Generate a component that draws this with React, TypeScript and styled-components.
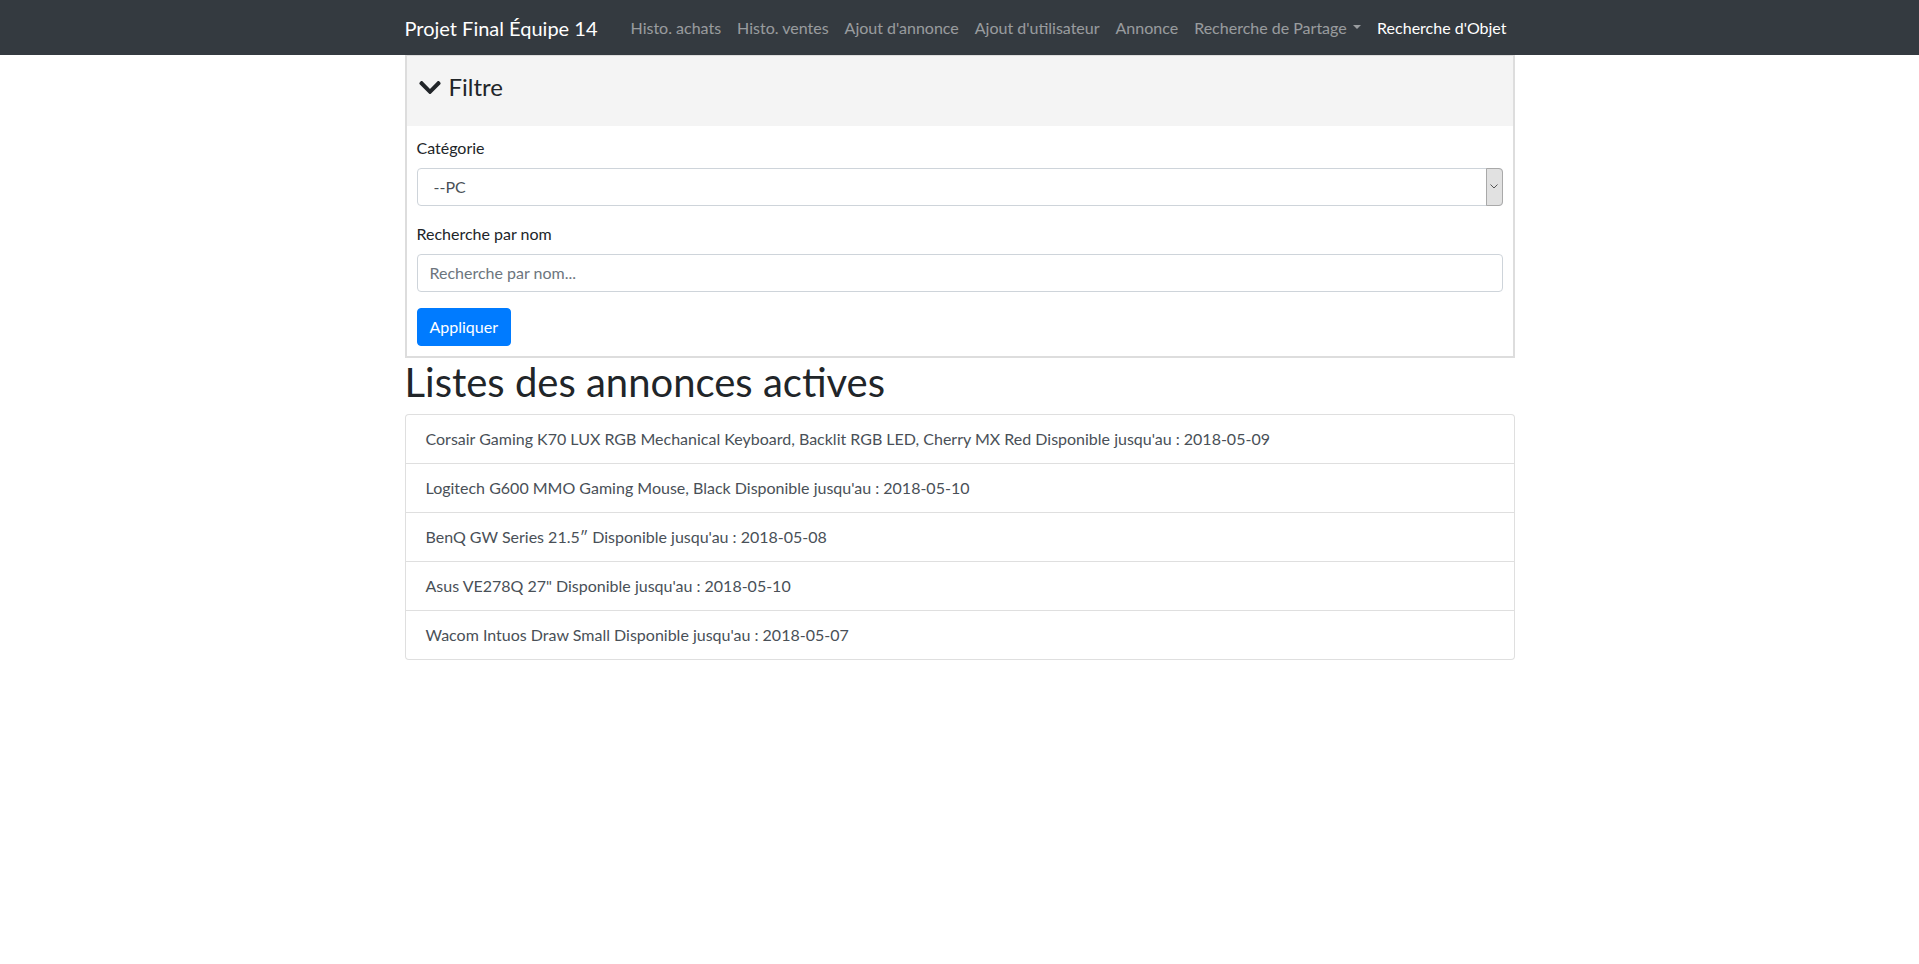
import React from "react";
import styled, { createGlobalStyle } from "styled-components";

const Global = createGlobalStyle`
  *, *::before, *::after { box-sizing: border-box; }
  body {
    margin: 0;
    font-family: "Lato", "Roboto", sans-serif;
    font-size: 16px;
    line-height: 1.5;
    color: #212529;
    background: #fff;
  }
`;

const Navbar = styled.nav`
  height: 55px;
  background: #343a40;
  padding: 0 16px;
  display: flex;
  align-items: center;
`;

const Container = styled.div`
  width: 100%;
  max-width: 1140px;
  margin: 0 auto;
  padding: 0 15px;
`;

const NavContainer = styled(Container)`
  display: flex;
  align-items: center;
`;

const Brand = styled.a`
  font-size: 20px;
  line-height: 30px;
  color: #fff;
  margin-right: 16px;
  text-decoration: none;
  white-space: nowrap;
`;

const NavList = styled.ul`
  list-style: none;
  display: flex;
  margin: 0 0 0 auto;
  padding: 0;
`;

const NavLink = styled.a<{ $active?: boolean }>`
  display: block;
  padding: 8px;
  font-size: 16px;
  line-height: 24px;
  color: ${(p) => (p.$active ? "#fff" : "rgba(255,255,255,0.5)")};
  text-decoration: none;
  white-space: nowrap;
`;

const Caret = styled.span`
  display: inline-block;
  margin-left: 0.4em;
  vertical-align: 0.255em;
  border-top: 0.3em solid;
  border-right: 0.3em solid transparent;
  border-left: 0.3em solid transparent;
`;

const FilterCard = styled.section`
  border: 2px solid #dddddd;
  border-top-width: 1px;
  background: #fff;
`;

const CardHeader = styled.div`
  background: #f4f4f4;
  padding: 17px 12px 16px;
`;

const CardTitle = styled.h4`
  margin: 0 0 8px;
  font-size: 24px;
  line-height: 28.8px;
  font-weight: 400;
  color: #212529;
  display: flex;
  align-items: center;
  gap: 8px;
`;

const CardBody = styled.div`
  padding: 10px;
`;

const FormGroup = styled.div`
  margin-bottom: 16px;
`;

const Label = styled.label`
  display: block;
  margin-bottom: 8px;
  color: #212529;
`;

const SelectWrap = styled.div`
  position: relative;
`;

const Select = styled.select`
  display: block;
  width: 100%;
  height: 38px;
  padding: 6px 24px 6px 16px;
  font: inherit;
  color: #495057;
  background: #fff;
  border: 1px solid #ced4da;
  border-radius: 4px;
  appearance: none;
  -webkit-appearance: none;
`;

const SelectArrow = styled.span`
  position: absolute;
  top: 0;
  right: 0;
  bottom: 0;
  width: 17px;
  background: #e1e1e1;
  border: 1px solid #a9a9a9;
  border-radius: 0 4px 4px 0;
  display: flex;
  align-items: center;
  justify-content: center;
  pointer-events: none;
`;

const Input = styled.input`
  display: block;
  width: 100%;
  height: 38px;
  padding: 6px 12px;
  font: inherit;
  color: #495057;
  background: #fff;
  border: 1px solid #ced4da;
  border-radius: 4px;
  &::placeholder {
    color: #6c757d;
  }
`;

const Button = styled.button`
  display: inline-block;
  height: 38px;
  padding: 6px 12px;
  font: inherit;
  line-height: 24px;
  color: #fff;
  background: #007bff;
  border: 1px solid #007bff;
  border-radius: 4px;
`;

const Heading = styled.h1`
  margin: 0 0 8px;
  font-size: 40px;
  line-height: 48px;
  font-weight: 400;
  color: #212529;
`;

const ListGroup = styled.div`
  display: flex;
  flex-direction: column;
  border-radius: 4px;
`;

const ListItem = styled.a`
  display: block;
  padding: 12px 20px;
  margin-bottom: -1px;
  color: #495057;
  background: #fff;
  border: 1px solid rgba(0, 0, 0, 0.125);
  text-decoration: none;
  line-height: 24px;
  &:first-child {
    border-top-left-radius: 4px;
    border-top-right-radius: 4px;
  }
  &:last-child {
    margin-bottom: 0;
    border-bottom-left-radius: 4px;
    border-bottom-right-radius: 4px;
  }
`;

const ChevronDown = () => (
  <svg width="22" height="25" viewBox="0 0 448 512" aria-hidden="true">
    <path
      fill="#212529"
      d="M207.029 381.476L12.686 187.132c-9.373-9.373-9.373-24.569 0-33.941l22.667-22.667c9.357-9.357 24.522-9.375 33.901-.04L224 284.505l154.745-154.021c9.379-9.335 24.544-9.317 33.901.04l22.667 22.667c9.373 9.373 9.373 24.569 0 33.941L240.971 381.476c-9.373 9.372-24.569 9.372-33.942 0z"
    />
  </svg>
);

const links = [
  "Histo. achats",
  "Histo. ventes",
  "Ajout d'annonce",
  "Ajout d'utilisateur",
  "Annonce",
];

const annonces = [
  "Corsair Gaming K70 LUX RGB Mechanical Keyboard, Backlit RGB LED, Cherry MX Red Disponible jusqu'au : 2018-05-09",
  "Logitech G600 MMO Gaming Mouse, Black Disponible jusqu'au : 2018-05-10",
  "BenQ GW Series 21.5″ Disponible jusqu'au : 2018-05-08",
  "Asus VE278Q 27\" Disponible jusqu'au : 2018-05-10",
  "Wacom Intuos Draw Small Disponible jusqu'au : 2018-05-07",
];

export default function App() {
  return (
    <>
      <Global />
      <Navbar>
        <NavContainer>
          <Brand href="#">Projet Final Équipe 14</Brand>
          <NavList>
            {links.map((l) => (
              <li key={l}>
                <NavLink href="#">{l}</NavLink>
              </li>
            ))}
            <li>
              <NavLink href="#">
                Recherche de Partage
                <Caret />
              </NavLink>
            </li>
            <li>
              <NavLink href="#" $active>
                Recherche d'Objet
              </NavLink>
            </li>
          </NavList>
        </NavContainer>
      </Navbar>
      <Container>
        <FilterCard>
          <CardHeader>
            <CardTitle>
              <ChevronDown />
              Filtre
            </CardTitle>
          </CardHeader>
          <CardBody>
            <FormGroup>
              <Label htmlFor="cat">Catégorie</Label>
              <SelectWrap>
                <Select id="cat" defaultValue="pc">
                  <option value="pc">--PC</option>
                </Select>
                <SelectArrow>
                  <svg width="8" height="5" viewBox="0 0 8 5" aria-hidden="true">
                    <path d="M0.5 0.5 L4 4 L7.5 0.5" fill="none" stroke="#555" strokeWidth="1" />
                  </svg>
                </SelectArrow>
              </SelectWrap>
            </FormGroup>
            <FormGroup>
              <Label htmlFor="nom">Recherche par nom</Label>
              <Input id="nom" placeholder="Recherche par nom..." />
            </FormGroup>
            <Button type="button">Appliquer</Button>
          </CardBody>
        </FilterCard>
        <Heading>Listes des annonces actives</Heading>
        <ListGroup>
          {annonces.map((a) => (
            <ListItem href="#" key={a}>
              {a}
            </ListItem>
          ))}
        </ListGroup>
      </Container>
    </>
  );
}
